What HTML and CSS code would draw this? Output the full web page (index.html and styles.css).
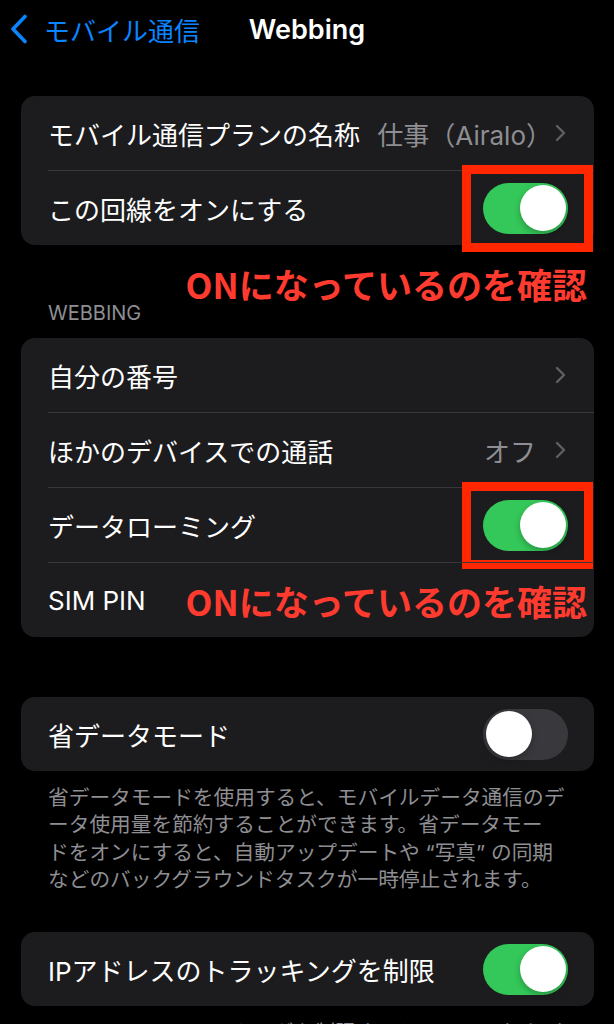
FILE: index.html
```html
<!DOCTYPE html>
<html lang="ja">
<head>
  <meta charset="UTF-8">
  <title>Webbing</title>
  <link rel="stylesheet" href="styles.css">
</head>
<body>
  <header class="nav">
    <a class="back" href="#">
      <svg width="20" height="30" viewBox="0 0 20 30"><path d="M16 2.5 L4 15 L16 27.5" fill="none" stroke="#0a84ff" stroke-width="3.6" stroke-linecap="round" stroke-linejoin="round"/></svg>
      <span>モバイル通信</span>
    </a>
    <h1>Webbing</h1>
    <span></span>
  </header>

  <div class="block">
    <ul class="group">
      <li class="row">
        <div class="cell">
          <span class="label">モバイル通信プランの名称</span>
          <span class="value value-tight">仕事（Airalo）</span>
          <svg class="chev" width="11" height="18" viewBox="0 0 11 18"><path d="M2 2 L9 9 L2 16" fill="none" stroke="#5f5f64" stroke-width="2.4" stroke-linecap="round" stroke-linejoin="round"/></svg>
        </div>
      </li>
      <li class="row">
        <div class="cell">
          <span class="label">この回線をオンにする</span>
          <span class="switch on"><span class="mark"></span></span>
        </div>
      </li>
    </ul>
    <p class="note note-below">ONになっているのを確認</p>
  </div>

  <h2 class="section-title">WEBBING</h2>
  <ul class="group">
    <li class="row">
      <div class="cell">
        <span class="label">自分の番号</span>
        <svg class="chev" width="11" height="18" viewBox="0 0 11 18"><path d="M2 2 L9 9 L2 16" fill="none" stroke="#5f5f64" stroke-width="2.4" stroke-linecap="round" stroke-linejoin="round"/></svg>
      </div>
    </li>
    <li class="row">
      <div class="cell">
        <span class="label">ほかのデバイスでの通話</span>
        <span class="value">オフ</span>
        <svg class="chev" width="11" height="18" viewBox="0 0 11 18"><path d="M2 2 L9 9 L2 16" fill="none" stroke="#5f5f64" stroke-width="2.4" stroke-linecap="round" stroke-linejoin="round"/></svg>
      </div>
    </li>
    <li class="row">
      <div class="cell">
        <span class="label">データローミング</span>
        <span class="switch on"><span class="mark"></span></span>
      </div>
    </li>
    <li class="row">
      <div class="cell">
        <span class="label">SIM PIN</span>
        <p class="note note-inline">ONになっているのを確認</p>
      </div>
    </li>
  </ul>

  <ul class="group group-gap">
    <li class="row">
      <div class="cell">
        <span class="label">省データモード</span>
        <span class="switch"></span>
      </div>
    </li>
  </ul>
  <p class="footnote">省データモードを使用すると、モバイルデータ通信のデ<br>ータ使用量を節約することができます。省データモー<br>ドをオンにすると、自動アップデートや “写真” の同期<br>などのバックグラウンドタスクが一時停止されます。</p>

  <ul class="group group-last">
    <li class="row">
      <div class="cell">
        <span class="label">IPアドレスのトラッキングを制限</span>
        <span class="switch on"></span>
      </div>
    </li>
  </ul>
  <p class="footnote">IPアドレスのトラッキングを制限すると、メールおよび<br>Safariで既知のトラッカーからIPアドレスを非表示にし<br>てプライバシーを保護します。</p>
</body>
</html>
```

FILE: styles.css
```css
body {
  margin: 0;
  background: #000;
  color: #fff;
  font-family: Inter, "Noto Sans CJK JP", sans-serif;
  overflow: hidden;
}
ul {
  list-style: none;
  margin: 0;
  padding: 0;
}

.nav {
  display: grid;
  grid-template-columns: 1fr auto 1fr;
  align-items: center;
  height: 58px;
}
.back {
  display: flex;
  align-items: center;
  gap: 15px;
  padding-left: 9px;
  color: #0a84ff;
  text-decoration: none;
  font-size: 26px;
}
.nav h1 {
  margin: 0;
  font-size: 27px;
  font-weight: 600;
}

.group {
  margin: 0 20px 0 21px;
  background: #1c1c1e;
  border-radius: 14px;
}
.block {
  position: relative;
  margin-top: 38px;
}
.row {
  padding-left: 27px;
}
.cell {
  position: relative;
  display: flex;
  align-items: center;
  gap: 19px;
  height: 74px;
  padding-right: 26px;
  border-top: 1px solid #38383a;
}
.row:first-child .cell {
  border-top: none;
}
.label {
  flex: 1;
  min-width: 0;
  font-size: 26px;
  white-space: nowrap;
}
.value {
  flex-shrink: 0;
  font-size: 26px;
  color: #8e8e93;
  white-space: nowrap;
}
.value-tight {
  margin-right: -16px;
}
.chev {
  flex-shrink: 0;
  margin-right: 2px;
}

.switch {
  position: relative;
  flex-shrink: 0;
  width: 85px;
  height: 51px;
  border-radius: 26px;
  background: #39393d;
}
.switch::after {
  content: "";
  position: absolute;
  top: 2.5px;
  left: 2.5px;
  width: 46px;
  height: 46px;
  border-radius: 50%;
  background: #fff;
  box-shadow: 0 3px 6px rgba(0, 0, 0, 0.25);
}
.switch.on {
  background: #34c759;
}
.switch.on::after {
  left: auto;
  right: 2.5px;
}
.mark {
  position: absolute;
  top: -18px;
  bottom: -18px;
  left: -21px;
  right: -25px;
  border: 9px solid #ff2600;
}

.note {
  margin: 0;
  font-family: "Noto Sans CJK JP", sans-serif;
  font-size: 35px;
  font-weight: 700;
  line-height: 1;
  color: #ff3b30;
  white-space: nowrap;
}
.note-below {
  position: absolute;
  right: 27px;
  top: calc(100% + 21px);
}
.note-inline {
  position: absolute;
  right: 7px;
  top: 50%;
  transform: translateY(-50%);
}

.section-title {
  margin: 0;
  height: 93px;
  box-sizing: border-box;
  padding: 58px 0 0 48px;
  font-size: 20px;
  font-weight: 400;
  line-height: 20px;
  color: #8e8e93;
}
.group-gap {
  margin-top: 60px;
}
.footnote {
  margin: 0;
  padding: 13px 20px 0 48px;
  font-size: 20.7px;
  line-height: 27.3px;
  color: #8e8e93;
}
.group-last {
  margin-top: 39px;
}
```
